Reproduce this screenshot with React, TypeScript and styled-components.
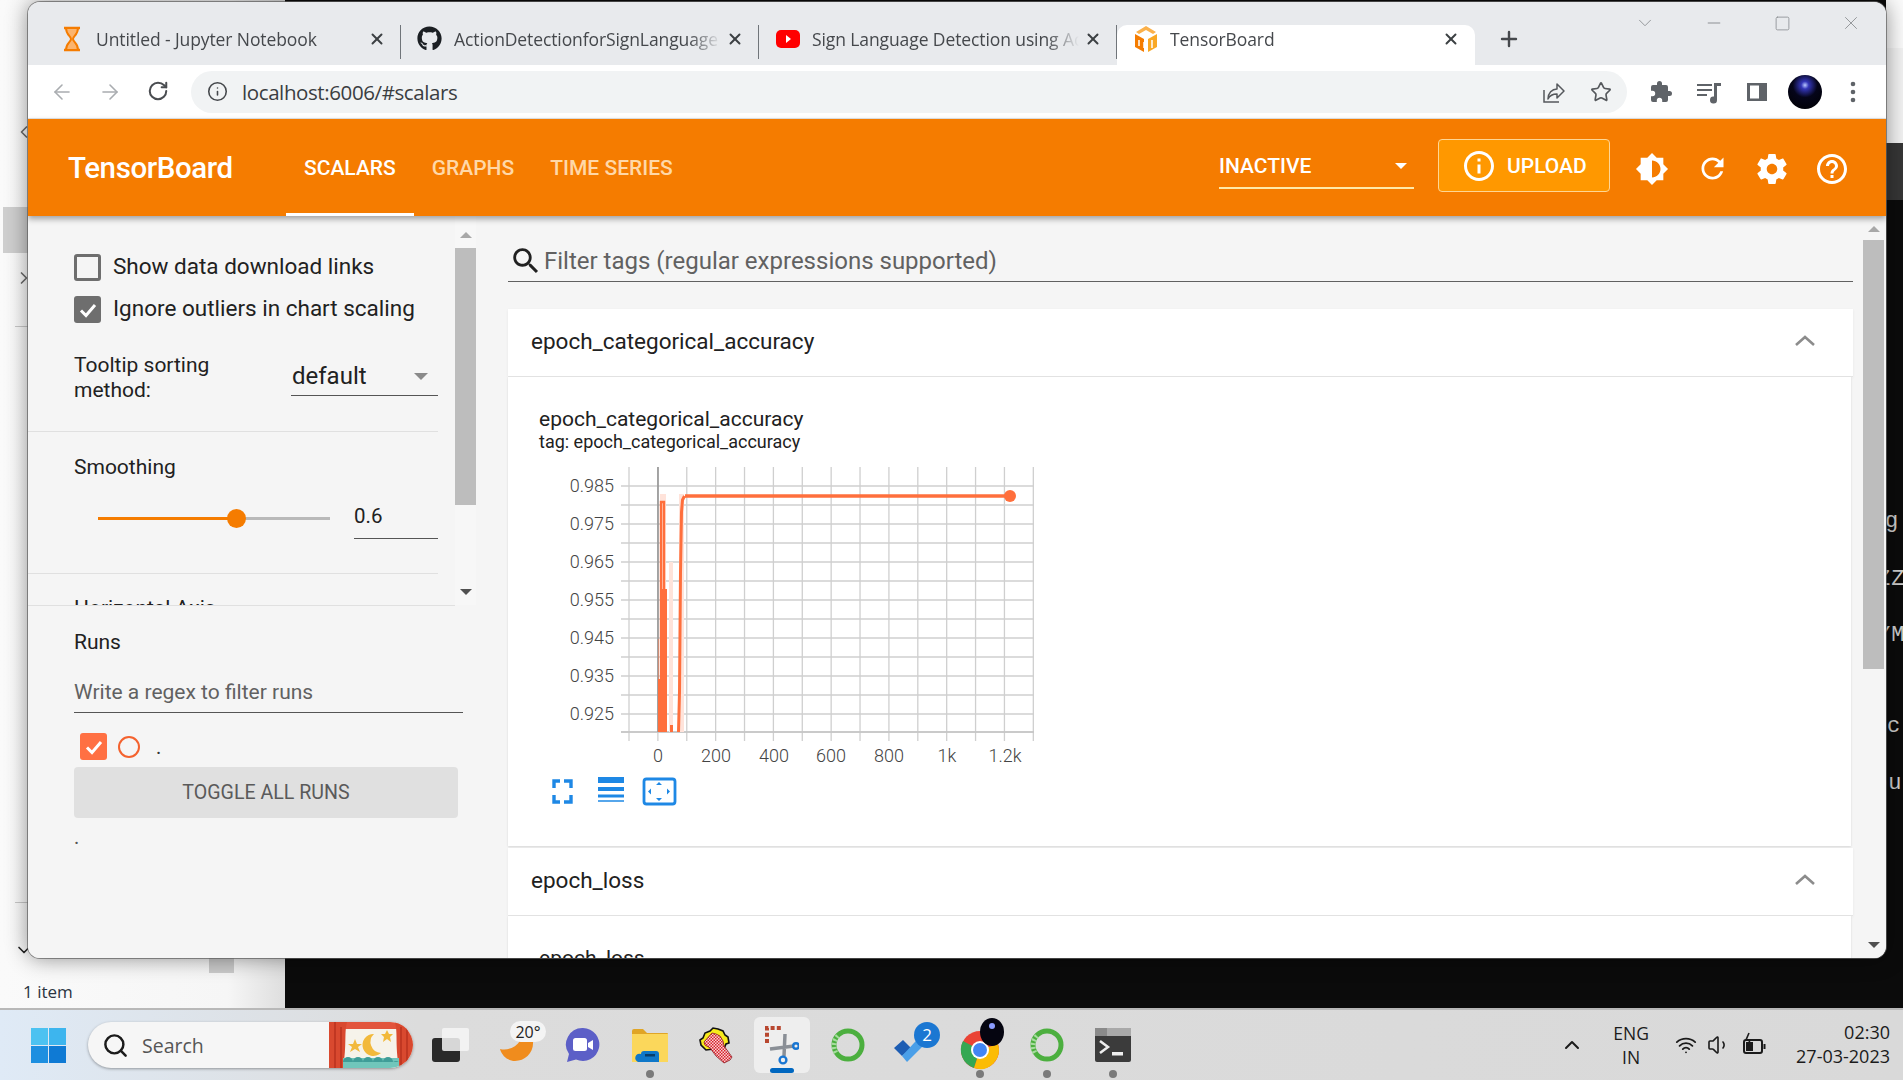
import React from "react";
import styled, { createGlobalStyle } from "styled-components";
import { FaGithub } from "react-icons/fa";
import { ArrowLeft, ArrowRight, RotateCw, Info, Star, X, Plus, Minus, Square, ChevronDown, ChevronUp, ChevronRight, ChevronLeft, Wifi, Volume1, Search as SearchIcon } from "lucide-react";

const Global = createGlobalStyle`
  html, body { margin: 0; padding: 0; width: 1903px; height: 1080px; overflow: hidden; }
  * { box-sizing: border-box; }
  body { font-family: Roboto, "Liberation Sans", sans-serif; }
`;

const Stage = styled.div`
  width: 1903px; height: 1080px; display: flex; flex-direction: column; overflow: hidden;
`;
const Desktop = styled.div`
  position: relative; height: 1008px; background: #0b0b0b; overflow: hidden;
`;
const Explorer = styled.div`
  position: absolute; left: 0; top: 0; width: 285px; height: 1008px;
  background: linear-gradient(90deg, #fafafa, #f6f6f6 80%, #dedede);
  color: #2b3442; font: 400 17px "Open Sans", sans-serif;
`;
const ExplorerTile = styled.div`
  position: absolute; left: 3px; top: 207px; width: 30px; height: 46px; background: #cfcfcf;
`;
const ExplorerLine = styled.div<{ $top: number }>`
  position: absolute; left: 15px; width: 20px; top: ${p => p.$top}px; height: 1px; background: #c8c8c8;
`;
const ExplorerGlyph = styled.div<{ $top: number }>`
  position: absolute; left: 14px; top: ${p => p.$top}px; color: #6a6a6a; display: flex;
`;
const ExplorerStatus = styled.div`
  position: absolute; left: 23px; top: 980px;
`;
const ExplorerThumb = styled.div`
  position: absolute; left: 209px; top: 958px; width: 25px; height: 15px; background: #cbcbcb;
`;
const TopRight = styled.div`
  position: absolute; left: 1886px; top: 0; width: 17px; height: 143px; background: #f3f3f3;
  border-top: 48px solid #fbfbfb;
`;
const TermTitle = styled.div`
  position: absolute; left: 1886px; top: 143px; width: 17px; height: 57px; background: #363636;
`;
const TermLine = styled.div<{ $top: number; $left: number }>`
  position: absolute; left: ${p => p.$left}px; top: ${p => p.$top}px; color: #cfcfcf;
  font: 400 22px "Liberation Mono", monospace; line-height: 24px; white-space: nowrap; letter-spacing: 1px;
`;
const Window = styled.div`
  position: absolute; left: 28px; top: 2px; width: 1858px; height: 956px;
  border-radius: 12px; overflow: hidden; display: flex; flex-direction: column;
  background: #f5f5f5; box-shadow: 0 0 22px rgba(0,0,0,.45), 0 0 0 1px rgba(120,120,120,.7);
`;
const TabStrip = styled.div`
  height: 63px; background: #e8eaed; display: flex; align-items: flex-end; padding-left: 15px; position: relative; flex: none;
`;
const Tab = styled.div<{ $active?: boolean }>`
  width: 358px; height: 40px; display: flex; align-items: center; position: relative;
  background: ${p => (p.$active ? "#fff" : "transparent")};
  border-radius: 10px 10px 0 0;
  color: #45484c;
  padding-bottom: 13px;
  ${p => (p.$active ? "" : "&::after { content: ''; position: absolute; right: 0; top: 0; bottom: 6px; width: 1px; background: #70757a; }")}
`;
const TabIcon = styled.span`
  width: 53px; flex: none; display: flex; justify-content: center; padding-left: 4px;
`;
const TabTitle = styled.span`
  width: 267px; margin-right: 4px; flex: none; overflow: hidden; white-space: nowrap; font: 400 17.5px "Open Sans", sans-serif; letter-spacing: -0.1px;
  -webkit-mask-image: linear-gradient(90deg, #000 88%, transparent 100%);
  mask-image: linear-gradient(90deg, #000 88%, transparent 100%);
`;
const TabClose = styled.span`
  width: 20px; display: flex; justify-content: center; color: #3c4043;
`;
const NewTab = styled.span`
  margin-left: 22px; margin-bottom: 10px; height: 33px; display: flex; align-items: center; color: #45484c;
`;
const WindowControls = styled.div`
  position: absolute; right: 1px; top: 9px; display: flex; color: #8d9094;
`;
const WindowControl = styled.span`
  width: 68.5px; display: flex; justify-content: center; height: 24px; align-items: center;
`;
const Toolbar = styled.div`
  height: 54px; background: #fff; display: flex; align-items: center; flex: none; border-bottom: 1px solid #e4e4e4; color: #5f6368;
`;
const NavButton = styled.span<{ $muted?: boolean }>`
  width: 48px; display: flex; justify-content: center; color: ${p => (p.$muted ? "#a9acb0" : "#4a4d51")};
`;
const NavGroup = styled.div`
  display: flex; padding-left: 10px; width: 163px;
`;
const Omnibox = styled.div`
  width: 1436px; height: 42px; border-radius: 21px; background: #f1f3f4; display: flex; align-items: center;
  padding-left: 16px; padding-right: 2px; color: #202124;
`;
const Address = styled.span`
  margin-left: 14px; font: 400 20.5px "Open Sans", sans-serif; letter-spacing: -0.4px; flex: 1; color: #3a3d41;
`;
const OmniAction = styled.span`
  width: 48px; display: flex; justify-content: center; color: #55585c;
`;
const ToolActions = styled.div`
  display: flex; align-items: center; margin-left: 10px; color: #5f6368;
`;
const ToolAction = styled.span`
  width: 48px; display: flex; justify-content: center;
`;
const Avatar = styled.span`
  width: 34px; height: 34px; border-radius: 50%;
  background: radial-gradient(circle at 50% 30%, #b9c8ff 0, #3436b8 13%, #05051a 42%, #000 100%);
`;
const Header = styled.div`
  height: 97px; background: #f57c00; display: flex; align-items: stretch; flex: none; color: #fff;
  box-shadow: 0 3px 6px rgba(0,0,0,.35); position: relative; z-index: 2;
`;
const Brand = styled.div`
  margin-left: 40px; width: 218px; display: flex; align-items: center; font-size: 29.5px; font-weight: 500; letter-spacing: -0.4px;
`;
const NavTab = styled.div<{ $active?: boolean }>`
  display: flex; align-items: center; padding: 0 18px; font-size: 21px; font-weight: 500; height: 100%; position: relative;
  color: ${p => (p.$active ? "#fff" : "#ffd8a8")};
  ${p => (p.$active ? "&::after { content: ''; position: absolute; left: 0; right: 0; bottom: 0; height: 3px; background: #fff; }" : "")}
`;
const Spacer = styled.div`
  flex: 1;
`;
const RunSelect = styled.div`
  width: 195px; height: 45px; margin-top: 25px; border-bottom: 2px solid #ffe9a8; display: flex; align-items: center;
  justify-content: space-between; font-size: 21px; font-weight: 500; padding-right: 7px;
`;
const Caret = styled.span<{ $color: string; $size?: number }>`
  width: 0; height: 0; display: inline-block;
  border-left: ${p => p.$size ?? 6}px solid transparent; border-right: ${p => p.$size ?? 6}px solid transparent;
  border-top: ${p => p.$size ?? 6}px solid ${p => p.$color};
`;
const Upload = styled.div`
  width: 172px; height: 53px; margin: 20px 5px 0 24px; background: #ff9800; border: 1px solid #ffd694; border-radius: 4px;
  display: flex; align-items: center; padding-left: 22px; gap: 10px; font-size: 21px; font-weight: 500;
`;
const HeaderIcon = styled.span`
  width: 60px; display: flex; align-items: center; justify-content: center;
`;
const HeaderIcons = styled.div`
  display: flex; margin-right: 24px; padding-top: 2px; margin-left: 7px;
`;
const Content = styled.div`
  flex: 1; display: flex; min-height: 0; background: #f5f5f5;
`;
const Sidebar = styled.div`
  width: 450px; flex: none; display: flex; flex-direction: column;
`;
const Settings = styled.div`
  height: 390px; flex: none; display: flex; overflow: hidden; width: 450px;
`;
const SettingsBody = styled.div`
  width: 427px; flex: none; border-bottom: 1px solid #e0e0e0; overflow: hidden;
`;
const SettingsSection = styled.section`
  width: 410px; padding-left: 46px; border-bottom: 1px solid #e0e0e0;
`;
const SectionTop = styled(SettingsSection)`
  height: 216px; padding-top: 38px;
`;
const SectionSmooth = styled(SettingsSection)`
  height: 142px; padding-top: 21px;
`;
const SectionAxis = styled(SettingsSection)`
  padding-top: 22px; border: 0; font-size: 21px; color: #212121;
`;
const CheckRow = styled.label`
  display: flex; align-items: center; gap: 12px; height: 27px; margin-bottom: 15px; font-size: 22.5px; line-height: 25px; color: #212121;
`;
const CheckText = styled.span`
  margin-top: -2px;
`;
const Check = styled.span<{ $on?: boolean; $color?: string }>`
  width: 27px; height: 27px; flex: none; border-radius: 3px; display: flex; align-items: center; justify-content: center;
  background: ${p => (p.$on ? p.$color ?? "#6e6e6e" : "transparent")};
  border: ${p => (p.$on ? "0" : "3px solid #6e6e6e")};
`;
const TooltipRow = styled.div`
  display: flex; margin-top: 30px; font-size: 21px; line-height: 24.5px; color: #212121;
`;
const TooltipLabel = styled.div`
  width: 217px; flex: none;
`;
const Select = styled.div`
  width: 147px; height: 46px; margin-top: -3px; border-bottom: 1px solid #555; display: flex; align-items: center; justify-content: space-between;
  font-size: 24px; padding: 7px 10px 0 1px; color: #212121;
`;
const SmoothLabel = styled.div`
  font-size: 21px; line-height: 28px; color: #212121;
`;
const SliderRow = styled.div`
  display: flex; align-items: flex-start; margin-top: 20px;
`;
const SliderTrack = styled.div`
  margin: 16px 0 0 24px; width: 232px; height: 3px; background: #b9b9b9; position: relative; flex: none;
`;
const SliderFill = styled.div`
  height: 100%; background: #f57c00;
`;
const SliderThumb = styled.div`
  position: absolute; top: -8px; width: 19px; height: 19px; margin-left: -10px; border-radius: 50%; background: #f57c00;
`;
const SmoothValue = styled.div`
  margin-left: 24px; width: 84px; height: 38px; border-bottom: 1px solid #555; font-size: 20.5px; line-height: 31px; color: #212121;
`;
const ScrollRail = styled.div`
  width: 21px; flex: none; display: flex; flex-direction: column; align-items: center; background: #f7f7f7;
`;
const ScrollArrow = styled.span<{ $down?: boolean; $dark?: boolean }>`
  width: 0; height: 0; flex: none;
  border-left: 6px solid transparent; border-right: 6px solid transparent;
  ${p => (p.$down ? `border-top: 6px solid ${p.$dark ? "#505050" : "#a8a8a8"}` : `border-bottom: 6px solid ${p.$dark ? "#505050" : "#a8a8a8"}`)};
`;
const ScrollThumb = styled.div<{ $h: number; $mt: number }>`
  width: 21px; height: ${p => p.$h}px; margin-top: ${p => p.$mt}px; background: #bdbdbd; flex: none;
`;
const RailEnd = styled.div`
  margin-top: auto; margin-bottom: 10px; display: flex;
`;
const SettingsRail = styled(ScrollRail)`
  height: 389px; padding-top: 16px;
`;
const Runs = styled.div`
  padding: 22px 0 0 46px; flex: 1;
`;
const RunsTitle = styled.div`
  font-size: 21px; line-height: 28px; color: #212121;
`;
const RunsFilter = styled.div`
  margin-top: 16px; width: 389px; height: 41px; border-bottom: 1px solid #555; font-size: 21px; line-height: 40px; color: #616161;
`;
const RunRow = styled.div`
  display: flex; align-items: center; margin: 20px 0 0 6px; height: 27px; font-size: 20px; color: #333;
`;
const RunCircle = styled.span`
  width: 22px; height: 22px; border-radius: 50%; border: 2px solid #f4622e; margin-left: 11px;
`;
const RunDot = styled.span`
  margin-left: 16px; line-height: 20px;
`;
const ToggleButton = styled.div`
  margin-top: 7px; width: 384px; height: 51px; background: #e0e0e0; border-radius: 4px; display: flex; align-items: center; justify-content: center;
  font-size: 19.6px; color: #5a5a5a;
`;
const RunDotLine = styled.div`
  margin-top: 5px; font-size: 20px; line-height: 28px; color: #555;
`;
const Main = styled.div`
  flex: 1; min-width: 0; height: 100%; overflow: hidden; padding: 0 10px 0 30px;
`;
const Filter = styled.div`
  height: 66px; border-bottom: 1px solid #616161; display: flex; align-items: center; padding-top: 24px; font-size: 24px; color: #616161;
`;
const FilterIcon = styled.span`
  display: flex; width: 36px; justify-content: center; color: #212121;
`;
const Card = styled.div`
  margin-bottom: 2px;
`;
const FirstCard = styled(Card)`
  margin-top: 27px;
`;
const CardHeader = styled.div`
  height: 68px; background: #fff; border-bottom: 1px solid #e4e4e4; display: flex; align-items: center; justify-content: space-between;
  padding: 0 37px 4px 23px; font-size: 22.5px; color: #212121; box-shadow: 0 1px 3px rgba(0,0,0,.06);
`;
const CardChevron = styled.svg`
  flex: none;
`;
const CardBody = styled.div<{ $h: number }>`
  height: ${p => p.$h}px; background: #fff; margin-right: 2px; padding: 29px 0 0 31px; overflow: hidden; box-shadow: 0 1px 2px rgba(0,0,0,.12);
`;
const ChartTitle = styled.div`
  font-size: 21px; line-height: 26px; color: #212121;
`;
const ChartTag = styled.div`
  font-size: 18px; line-height: 20px; color: #212121;
`;
const ChartSvg = styled.svg`
  display: block; margin: 7px 0 0 1px;
`;
const MainRail = styled(ScrollRail)`
  height: 100%; padding-top: 10px; margin-right: 2px; background: #f5f5f5;
`;
const Taskbar = styled.div`
  height: 72px; flex: none; display: flex; align-items: center; padding-left: 31px;
  background: linear-gradient(90deg, #dfeaf6 0, #dcdcdc 22%, #d9d9d9 100%); border-top: 2px solid #b8b8b8;
`;
const WinLogo = styled.svg`
  flex: none; margin-right: 22px;
`;
const SearchPill = styled.div`
  width: 325px; height: 46px; border-radius: 23px; background: #f6f6f6; box-shadow: 0 1px 3px rgba(0,0,0,.35); display: flex; align-items: center;
  padding-left: 14px; overflow: hidden; color: #1b1b1b; flex: none; margin-right: 5px;
`;
const SearchText = styled.span`
  margin-left: 13px; font: 400 19.5px "Open Sans", sans-serif; color: #555; flex: 1;
`;
const Slot = styled.div<{ $selected?: boolean }>`
  width: 66.2px; height: 56px; display: flex; align-items: center; justify-content: center; position: relative; flex: none;
  ${p => (p.$selected ? "background: #eeeeee; border-radius: 6px; margin: 0 5px; width: 56px;" : "")}
`;
const RunningDot = styled.span`
  position: absolute; left: 50%; margin-left: -4px; bottom: -5px; width: 8px; height: 8px; border-radius: 50%; background: #7a7a7a;
`;
const ActiveBar = styled.span`
  position: absolute; left: 16px; bottom: 0; width: 24px; height: 5px; border-radius: 3px; background: #0067c0;
`;
const Tray = styled.div`
  margin-left: auto; display: flex; align-items: center; color: #1b1b1b; padding-right: 13px;
`;
const TrayCaret = styled.span`
  display: flex; margin-right: 25px; margin-left: 3px;
`;
const TrayLang = styled.div`
  font: 400 17.5px/24px "Open Sans", sans-serif; text-align: center; width: 40px; margin-right: 24px; margin-left: 2px;
`;
const TrayIcons = styled.div`
  display: flex; align-items: center; gap: 10px; width: 100px; margin-right: 21px;
`;
const TrayClock = styled.div`
  font: 400 18px/24px "Open Sans", sans-serif; text-align: right; margin-top: -2px;
`;

const M = ({ d, size = 24, color = "currentColor" }: { d: string; size?: number; color?: string }) => (
  <svg width={size} height={size} viewBox="0 0 24 24" fill={color} fillRule="evenodd"><path d={d} /></svg>
);

const P = {
  bright: "M20 15.31L23.31 12 20 8.69V4h-4.69L12 .69 8.69 4H4v4.69L.69 12 4 15.31V20h4.69L12 23.31 15.31 20H20v-4.69zM12 18V6c3.31 0 6 2.69 6 6s-2.69 6-6 6z",
  refresh: "M17.65 6.35C16.2 4.9 14.21 4 12 4c-4.42 0-7.99 3.58-7.99 8s3.57 8 7.99 8c3.73 0 6.84-2.55 7.73-6h-2.08c-.82 2.33-3.04 4-5.65 4-3.31 0-6-2.69-6-6s2.69-6 6-6c1.66 0 3.14.69 4.22 1.78L13 11h7V4l-2.35 2.35z",
  gear: "M19.43 12.98c.04-.32.07-.64.07-.98s-.03-.66-.07-.98l2.11-1.65c.19-.15.24-.42.12-.64l-2-3.46c-.12-.22-.39-.3-.61-.22l-2.49 1c-.52-.4-1.08-.73-1.69-.98l-.38-2.65C14.46 2.18 14.25 2 14 2h-4c-.25 0-.46.18-.49.42l-.38 2.65c-.61.25-1.17.59-1.69.98l-2.49-1c-.23-.09-.49 0-.61.22l-2 3.46c-.13.22-.07.49.12.64l2.11 1.65c-.04.32-.07.65-.07.98s.03.66.07.98l-2.11 1.65c-.19.15-.24.42-.12.64l2 3.46c.12.22.39.3.61.22l2.49-1c.52.4 1.08.73 1.69.98l.38 2.65c.03.24.24.42.49.42h4c.25 0 .46-.18.49-.42l.38-2.65c.61-.25 1.17-.59 1.69-.98l2.49 1c.23.09.49 0 .61-.22l2-3.46c.12-.22.07-.49-.12-.64l-2.11-1.65zM12 15.5c-1.93 0-3.5-1.57-3.5-3.5s1.57-3.5 3.5-3.5 3.5 1.57 3.5 3.5-1.57 3.5-3.5 3.5z",
  help: "M11 18h2v-2h-2v2zm1-16C6.48 2 2 6.48 2 12s4.48 10 10 10 10-4.48 10-10S17.52 2 12 2zm0 18c-4.41 0-8-3.59-8-8s3.59-8 8-8 8 3.59 8 8-3.59 8-8 8zm0-14c-2.21 0-4 1.79-4 4h2c0-1.1.9-2 2-2s2 .9 2 2c0 2-3 1.75-3 5h2c0-2.25 3-2.5 3-5 0-2.21-1.79-4-4-4z",
  info: "M11 7h2v2h-2zm0 4h2v6h-2zm1-9C6.48 2 2 6.48 2 12s4.48 10 10 10 10-4.48 10-10S17.52 2 12 2zm0 18c-4.41 0-8-3.59-8-8s3.59-8 8-8 8 3.59 8 8-3.59 8-8 8z",
  search: "M15.5 14h-.79l-.28-.27C15.41 12.59 16 11.11 16 9.5 16 5.91 13.09 3 9.5 3S3 5.91 3 9.5 5.91 16 9.5 16c1.61 0 3.09-.59 4.23-1.57l.27.28v.79l5 4.99L20.49 19l-4.99-5zm-6 0C7.01 14 5 11.99 5 9.5S7.01 5 9.5 5 14 7.01 14 9.5 11.99 14 9.5 14z",
  puzzle: "M20.5 11H19V7a2 2 0 0 0-2-2h-4V3.5a2.5 2.5 0 0 0-5 0V5H4a2 2 0 0 0-2 2v3.8h1.5a2.7 2.7 0 0 1 0 5.4H2V20a2 2 0 0 0 2 2h3.8v-1.5a2.7 2.7 0 0 1 5.4 0V22H17a2 2 0 0 0 2-2v-4h1.5a2.5 2.5 0 0 0 0-5z",
  panel: "M2 3h20v18H2zM5 5.5v13h9v-13z",
};

const Tick = ({ size = 20 }: { size?: number }) => (
  <svg width={size} height={size} viewBox="0 0 20 20" fill="none" stroke="#fff" strokeWidth="3"><path d="M3 10.5l5 5L17 5" /></svg>
);

const Chevron = () => (
  <CardChevron width="22" height="14" viewBox="0 0 22 14" fill="none" stroke="#8c8c8c" strokeWidth="2.6"><path d="M2 11l9-8 9 8" /></CardChevron>
);

const ShareIcon = () => (
  <svg width="24" height="24" viewBox="0 0 24 24" fill="none" stroke="currentColor" strokeWidth="1.5">
    <path d="M3 10v12h15" />
    <path d="M7 19c0-6 4-10 9-10V4l7 7-7 7v-4c-4 0-7 1-9 5z" strokeLinejoin="round" />
  </svg>
);
const QueueMusic = () => (
  <svg width="26" height="24" viewBox="0 0 26 24" fill="currentColor">
    <path d="M1 4h15v2H1zM1 9h15v2H1zM1 14h10v2H1zM18 3h7v3h-4v14a3.5 3.5 0 1 1-3-3.4z" />
  </svg>
);
const Dots = () => (
  <svg width="8" height="24" viewBox="0 0 8 24" fill="currentColor">
    <circle cx="4" cy="4" r="2.3" /><circle cx="4" cy="12" r="2.3" /><circle cx="4" cy="20" r="2.3" />
  </svg>
);

const Hourglass = () => (
  <svg width="20" height="26" viewBox="0 0 20 26" fill="none" stroke="#f57c00" strokeWidth="2">
    <path d="M2 2h16M2 24h16" strokeWidth="2.5" />
    <path d="M4 2c0 7 5 8 5 11s-5 4-5 11h12c0-7-5-8-5-11s5-4 5-11z" fill="#fbb46e" />
  </svg>
);
const YouTube = () => (
  <svg width="24" height="18" viewBox="0 0 24 18"><rect width="24" height="18" rx="5" fill="#f00" /><path d="M10 5l5 4-5 4z" fill="#fff" /></svg>
);
const TbLogo = () => (
  <svg width="24" height="28" viewBox="0 0 24 28">
    <path d="M12 1L2 7l3 2 7-4 7 4 3-2z" fill="#fbb14b" />
    <path d="M1 9l9 5v13L1 22z" fill="#f57c00" />
    <path d="M23 9l-9 5v13l9-5z" fill="#f9a825" />
    <path d="M5 15v6M10 17v6M18 15v8" stroke="#fff" strokeWidth="1.5" />
  </svg>
);

const Chart = () => {
  const hy = [487, 506, 525, 544, 563, 582, 601, 620, 639, 658, 677, 696, 715, 733];
  const vx = Array.from({ length: 15 }, (_, i) => 629 + i * 28.88);
  const yl = [["0.985", 487], ["0.975", 525], ["0.965", 563], ["0.955", 601], ["0.945", 639], ["0.935", 677], ["0.925", 715]] as const;
  const xl = [["0", 658], ["200", 716], ["400", 774], ["600", 831], ["800", 889], ["1k", 947], ["1.2k", 1005]] as const;
  return (
    <ChartSvg width="500" height="360" viewBox="540 460 500 360">
      {hy.map(y => <line key={y} x1="621" x2="1034" y1={y} y2={y} stroke="#cfcfcf" strokeWidth="1.5" />)}
      {vx.map(x => <line key={x} x1={x} x2={x} y1="468" y2="742" stroke="#cfcfcf" strokeWidth="1.3" />)}
      <line x1="621" x2="1034" y1="733" y2="733" stroke="#c4c4c4" strokeWidth="1.4" />
      <line x1="658" x2="658" y1="468" y2="733" stroke="#8a8a8a" strokeWidth="1.4" />
      <g fill="#ffe3da">
        <rect x="660" y="495" width="6" height="238" />
        <rect x="669" y="563" width="4" height="170" />
        <rect x="679" y="495" width="5" height="238" />
      </g>
      <g fill="none" stroke="#ff6f3c">
        <path d="M658.5 733V640" strokeWidth="1" opacity=".45" />
        <path d="M661 733V503h3v90" strokeWidth="2.4" />
        <path d="M685 497H1010" strokeWidth="3.4" />
        <path d="M678.5 733l1-40 1-120 1-60 1-12 2-4" strokeWidth="3" />
      </g>
      <g fill="#ff6f3c">
        <rect x="658" y="680" width="2" height="53" />
        <rect x="661" y="590" width="6" height="143" />
        <rect x="670" y="726" width="3" height="7" />
        <circle cx="1010" cy="497" r="6" />
      </g>
      <g fontFamily="Roboto, sans-serif" fontSize="18" fontWeight="300" fill="#444">
        {yl.map(([t, y]) => <text key={t} x="614" y={y + 6} textAnchor="end">{t}</text>)}
        {xl.map(([t, x]) => <text key={t} x={x} y="763" textAnchor="middle">{t}</text>)}
      </g>
      <g fill="none" stroke="#1e88e5" strokeWidth="3.4">
        <path d="M554 789v-7h6M564 782h7v7M571 796v7h-7M560 803h-6v-7" />
        <path d="M598 781h26" strokeWidth="6" /><path d="M598 790h26" strokeWidth="4" /><path d="M598 797h26" strokeWidth="3" /><path d="M598 802h26" strokeWidth="1.5" />
        <rect x="644" y="780" width="31" height="25" rx="2.5" strokeWidth="2.8" />
      </g>
      <g fill="#1e88e5">
        <path d="M659 783l3 3h-6zM659 802l3-3h-6zM648 792.5l3-3v6zM670 792.5l-3-3v6z" />
      </g>
    </ChartSvg>
  );
};

const Curtains = () => (
  <svg width="84" height="46" viewBox="0 0 84 46" style={{ flex: "none" }}>
    <rect width="84" height="46" fill="#f6f3ea" />
    <rect y="0" width="84" height="7" fill="#e2543c" />
    <path d="M0 0h18c-3 12 0 22-4 46H0z" fill="#d9492f" />
    <path d="M84 0H66c3 12 0 22 4 46h14z" fill="#d9492f" />
    <path d="M6 0v46M12 5v41M72 5v41M78 0v46" stroke="#b8321f" strokeWidth="1.5" />
    <path d="M45 12a11 11 0 1 0 7 19 11 11 0 0 1-7-19z" fill="#f2b93b" />
    <path d="M26 17l2 5 5 0-4 3 2 5-5-3-5 3 2-5-4-3 5 0z" fill="#f2b93b" />
    <path d="M58 8l2 4 4 0-3 3 1 5-4-3-4 3 1-5-3-3 4 0z" fill="#f2b93b" />
    <rect x="14" y="36" width="56" height="10" fill="#70c6bb" />
    <path d="M14 40a5 5 0 0 1 10 0 5 5 0 0 1 10 0 5 5 0 0 1 10 0 5 5 0 0 1 10 0 5 5 0 0 1 10 0 5 5 0 0 1 6 0" fill="#3f9d98" />
  </svg>
);

const Ring = ({ size = 36 }: { size?: number }) => (
  <svg width={size} height={size} viewBox="0 0 36 36" fill="none">
    <circle cx="18" cy="18" r="14" stroke="#4caf3f" strokeWidth="5" />
    <path d="M8 9A14 14 0 0 0 6 26" stroke="#a8dca0" strokeWidth="5" strokeDasharray="2 2" />
  </svg>
);

const TaskIcons = {
  view: (
    <svg width="38" height="34" viewBox="0 0 38 34">
      <rect x="0" y="10" width="28" height="24" rx="3" fill="#2a2a2a" />
      <rect x="10" y="0" width="27" height="23" rx="2" fill="#f6f6f6" opacity=".85" />
    </svg>
  ),
  weather: (
    <svg width="60" height="48" viewBox="0 0 60 48">
      <path d="M13 28c8 2 16-2 20-8h13c1 12-8 20-18 20-7 0-13-5-15-12z" fill="#f08c1d" />
      <rect x="23" y="0" width="36" height="21" rx="10.5" fill="#f4f4f4" />
      <text x="41" y="17" textAnchor="middle" fontFamily="Open Sans, sans-serif" fontSize="16" fill="#222">20°</text>
    </svg>
  ),
  meet: (
    <svg width="36" height="36" viewBox="0 0 36 36">
      <path d="M18 1a16.5 16.5 0 1 1-7 31.5L2 35l2-8A16.5 16.5 0 0 1 18 1z" fill="#5c5fc7" />
      <rect x="8" y="11" width="14" height="13" rx="2.5" fill="#fff" />
      <path d="M23 16l5-3v10l-5-3z" fill="#fff" />
    </svg>
  ),
  files: (
    <svg width="38" height="33" viewBox="0 0 38 33">
      <path d="M1 2a2 2 0 0 1 2-2h9l4 4h20a1 1 0 0 1 1 1v4H1z" fill="#e0a526" />
      <rect x="1" y="5" width="36" height="28" fill="#fbd75b" />
      <path d="M10 25a3 3 0 0 1 3-3h12a3 3 0 0 1 3 3v8H7a3 3 0 0 1 3-8z" fill="#0f78c9" />
      <rect x="14" y="25" width="10" height="2.5" fill="#083e6b" />
    </svg>
  ),
  hand: (
    <svg width="38" height="38" viewBox="0 0 38 38">
      <defs>
        <pattern id="chk" width="3" height="3" patternUnits="userSpaceOnUse">
          <rect width="3" height="3" fill="#f8d4d4" /><rect width="1.5" height="1.5" fill="#d8202c" /><rect x="1.5" y="1.5" width="1.5" height="1.5" fill="#d8202c" />
        </pattern>
      </defs>
      <path d="M3 14l3-2 2-5 5-2 3-3 5 1 5 2 2 4 3 2 1 6-3 1-3 7-9-2-8 1-5-5z" fill="#f6ea1c" stroke="#111" strokeWidth="1.6" />
      <path d="M7 16l8-9 4 1 4 2 3 5 1 5 8 11-2 3-6 3-8-7-6-8-5-3z" fill="url(#chk)" stroke="#8a1a22" strokeWidth=".8" />
    </svg>
  ),
  snip: (
    <svg width="34" height="40" viewBox="0 0 34 40" fill="none">
      <path d="M2 18V3h15" stroke="#b8472f" strokeWidth="4" strokeDasharray="4 2.2" />
      <path d="M20 9l-1 22M5 24l24-3" stroke="#8a8f96" strokeWidth="3.5" />
      <circle cx="31" cy="21" r="2.8" stroke="#1976d2" strokeWidth="2.4" />
      <circle cx="18" cy="35" r="3.4" stroke="#1976d2" strokeWidth="2.4" />
    </svg>
  ),
  tasks: (
    <svg width="62" height="50" viewBox="0 0 62 50">
      <g transform="translate(10 0)">
        <path d="M1 28l9-8 8 8-9 8z" fill="#1d5db3" />
        <path d="M9 36l24-26 7 6-26 26z" fill="#4a9fe8" />
        <circle cx="34" cy="15" r="13" fill="#1b77d2" />
        <text x="34" y="21" textAnchor="middle" fontFamily="Open Sans, sans-serif" fontSize="17" fill="#fff">2</text>
      </g>
    </svg>
  ),
  chrome: (
    <svg width="60" height="54" viewBox="0 0 60 54">
      <g transform="translate(10 0)">
        <circle cx="20" cy="32" r="19" fill="#ea4335" />
        <path d="M20 32L3 23A19 19 0 0 0 14 50z" fill="#34a853" />
        <path d="M20 32l-6 18A19 19 0 0 0 38 26z" fill="#fbbc05" />
        <circle cx="20" cy="32" r="9" fill="#fff" /><circle cx="20" cy="32" r="7" fill="#4285f4" />
        <ellipse cx="32" cy="14" rx="12" ry="14" fill="#050510" />
        <circle cx="32" cy="8" r="3" fill="#8b9cff" />
      </g>
    </svg>
  ),
  term: (
    <svg width="36" height="34" viewBox="0 0 36 34">
      <rect width="36" height="34" rx="2" fill="#3b3b3b" />
      <rect width="36" height="8" fill="#8a8a8a" />
      <rect x="12" width="24" height="8" fill="#a9a9a9" />
      <path d="M5 13l8 6-8 6" fill="none" stroke="#eee" strokeWidth="2.5" />
      <rect x="17" y="24" width="11" height="3.5" fill="#eee" />
    </svg>
  ),
};

const BatteryIcon = () => (
  <svg width="26" height="26" viewBox="0 0 26 26" fill="none" stroke="currentColor" strokeWidth="2">
    <rect x="3" y="8" width="18" height="13" rx="2" />
    <path d="M23.5 12v5" />
    <path d="M5 10h7v9H5z" fill="currentColor" stroke="none" />
    <path d="M8 1L5 8h4l-2 5" strokeWidth="1.6" />
  </svg>
);

export default function App() {
  return (
    <Stage>
      <Global />
      <Desktop>
        <Explorer>
          <ExplorerGlyph $top={122}><ChevronLeft size={20} /></ExplorerGlyph>
          <ExplorerTile />
          <ExplorerGlyph $top={268}><ChevronRight size={20} /></ExplorerGlyph>
          <ExplorerLine $top={326} />
          <ExplorerLine $top={902} />
          <ExplorerGlyph $top={940}><ChevronDown size={20} color="#222" /></ExplorerGlyph>
          <ExplorerThumb />
          <ExplorerStatus>1 item</ExplorerStatus>
        </Explorer>
        <TopRight />
        <TermTitle />
        <TermLine $top={510} $left={1885}>g:</TermLine>
        <TermLine $top={568} $left={1877}>ZZ</TermLine>
        <TermLine $top={624} $left={1877}>YM</TermLine>
        <TermLine $top={715} $left={1887}>c</TermLine>
        <TermLine $top={772} $left={1874}>ou</TermLine>
        <Window>
          <TabStrip>
            <Tab>
              <TabIcon><Hourglass /></TabIcon>
              <TabTitle>Untitled - Jupyter Notebook</TabTitle>
              <TabClose><X size={18} strokeWidth={2.6} /></TabClose>
            </Tab>
            <Tab>
              <TabIcon><FaGithub size={25} color="#1b1f23" /></TabIcon>
              <TabTitle>ActionDetectionforSignLanguage</TabTitle>
              <TabClose><X size={18} strokeWidth={2.6} /></TabClose>
            </Tab>
            <Tab>
              <TabIcon><YouTube /></TabIcon>
              <TabTitle>Sign Language Detection using Action</TabTitle>
              <TabClose><X size={18} strokeWidth={2.6} /></TabClose>
            </Tab>
            <Tab $active>
              <TabIcon><TbLogo /></TabIcon>
              <TabTitle>TensorBoard</TabTitle>
              <TabClose><X size={18} strokeWidth={2.6} /></TabClose>
            </Tab>
            <NewTab><Plus size={24} strokeWidth={2.4} /></NewTab>
            <WindowControls>
              <WindowControl><ChevronDown size={22} strokeWidth={1} /></WindowControl>
              <WindowControl><Minus size={20} strokeWidth={1.2} /></WindowControl>
              <WindowControl><Square size={17} strokeWidth={1.2} /></WindowControl>
              <WindowControl><X size={22} strokeWidth={1} /></WindowControl>
            </WindowControls>
          </TabStrip>
          <Toolbar>
            <NavGroup>
              <NavButton $muted><ArrowLeft size={24} strokeWidth={1.6} /></NavButton>
              <NavButton $muted><ArrowRight size={24} strokeWidth={1.6} /></NavButton>
              <NavButton><RotateCw size={22} strokeWidth={2.2} /></NavButton>
            </NavGroup>
            <Omnibox>
              <Info size={21} strokeWidth={1.8} color="#45484c" />
              <Address>localhost:6006/#scalars</Address>
              <OmniAction><ShareIcon /></OmniAction>
              <OmniAction><Star size={22} strokeWidth={1.8} /></OmniAction>
            </Omnibox>
            <ToolActions>
              <ToolAction><M d={P.puzzle} size={24} /></ToolAction>
              <ToolAction><QueueMusic /></ToolAction>
              <ToolAction><M d={P.panel} size={24} /></ToolAction>
              <ToolAction><Avatar /></ToolAction>
              <ToolAction><Dots /></ToolAction>
            </ToolActions>
          </Toolbar>
          <Header>
            <Brand>TensorBoard</Brand>
            <NavTab $active>SCALARS</NavTab>
            <NavTab>GRAPHS</NavTab>
            <NavTab>TIME SERIES</NavTab>
            <Spacer />
            <RunSelect>INACTIVE<Caret $color="#fff" /></RunSelect>
            <Upload><M d={P.info} size={36} />UPLOAD</Upload>
            <HeaderIcons>
              <HeaderIcon><M d={P.bright} size={34} /></HeaderIcon>
              <HeaderIcon><M d={P.refresh} size={33} /></HeaderIcon>
              <HeaderIcon><M d={P.gear} size={36} /></HeaderIcon>
              <HeaderIcon><M d={P.help} size={36} /></HeaderIcon>
            </HeaderIcons>
          </Header>
          <Content>
            <Sidebar>
              <Settings>
                <SettingsBody>
                  <SectionTop>
                    <CheckRow><Check /><CheckText>Show data download links</CheckText></CheckRow>
                    <CheckRow><Check $on><Tick /></Check><CheckText>Ignore outliers in chart scaling</CheckText></CheckRow>
                    <TooltipRow>
                      <TooltipLabel>Tooltip sorting<br />method:</TooltipLabel>
                      <Select>default<Caret $color="#8a8a8a" $size={7} /></Select>
                    </TooltipRow>
                  </SectionTop>
                  <SectionSmooth>
                    <SmoothLabel>Smoothing</SmoothLabel>
                    <SliderRow>
                      <SliderTrack>
                        <SliderFill style={{ width: "60%" }} />
                        <SliderThumb style={{ left: "60%" }} />
                      </SliderTrack>
                      <SmoothValue>0.6</SmoothValue>
                    </SliderRow>
                  </SectionSmooth>
                  <SectionAxis>Horizontal Axis</SectionAxis>
                </SettingsBody>
                <SettingsRail>
                  <ScrollArrow />
                  <ScrollThumb $h={257} $mt={10} />
                  <RailEnd><ScrollArrow $down $dark /></RailEnd>
                </SettingsRail>
              </Settings>
              <Runs>
                <RunsTitle>Runs</RunsTitle>
                <RunsFilter>Write a regex to filter runs</RunsFilter>
                <RunRow>
                  <Check $on $color="#ff7043"><Tick /></Check>
                  <RunCircle />
                  <RunDot>.</RunDot>
                </RunRow>
                <ToggleButton>TOGGLE ALL RUNS</ToggleButton>
                <RunDotLine>.</RunDotLine>
              </Runs>
            </Sidebar>
            <Main>
              <Filter>
                <FilterIcon><M d={P.search} size={34} /></FilterIcon>
                Filter tags (regular expressions supported)
              </Filter>
              <FirstCard>
                <CardHeader>epoch_categorical_accuracy<Chevron /></CardHeader>
                <CardBody $h={469}>
                  <ChartTitle>epoch_categorical_accuracy</ChartTitle>
                  <ChartTag>tag: epoch_categorical_accuracy</ChartTag>
                  <Chart />
                </CardBody>
              </FirstCard>
              <Card>
                <CardHeader>epoch_loss<Chevron /></CardHeader>
                <CardBody $h={60}>
                  <ChartTitle>epoch_loss</ChartTitle>
                </CardBody>
              </Card>
            </Main>
            <MainRail>
              <ScrollArrow />
              <ScrollThumb $h={429} $mt={8} />
              <RailEnd><ScrollArrow $down $dark /></RailEnd>
            </MainRail>
          </Content>
        </Window>
      </Desktop>
      <Taskbar>
        <WinLogo width="35" height="35" viewBox="0 0 35 35">
          <rect width="17" height="17" fill="#4cc2f1" /><rect x="18" width="17" height="17" fill="#3db5ee" />
          <rect y="18" width="17" height="17" fill="#1d8fe0" /><rect x="18" y="18" width="17" height="17" fill="#0f7ad4" />
        </WinLogo>
        <SearchPill>
          <SearchIcon size={27} strokeWidth={2.2} />
          <SearchText>Search</SearchText>
          <Curtains />
        </SearchPill>
        <Slot>{TaskIcons.view}</Slot>
        <Slot>{TaskIcons.weather}</Slot>
        <Slot>{TaskIcons.meet}</Slot>
        <Slot>{TaskIcons.files}<RunningDot /></Slot>
        <Slot>{TaskIcons.hand}</Slot>
        <Slot $selected>{TaskIcons.snip}<ActiveBar /></Slot>
        <Slot><Ring /></Slot>
        <Slot>{TaskIcons.tasks}</Slot>
        <Slot>{TaskIcons.chrome}<RunningDot /></Slot>
        <Slot><Ring /><RunningDot /></Slot>
        <Slot>{TaskIcons.term}<RunningDot /></Slot>
        <Tray>
          <TrayCaret><ChevronUp size={24} strokeWidth={2} /></TrayCaret>
          <TrayLang>ENG<br />IN</TrayLang>
          <TrayIcons>
            <Wifi size={22} strokeWidth={2} />
            <Volume1 size={24} strokeWidth={1.6} />
            <BatteryIcon />
          </TrayIcons>
          <TrayClock>02:30<br />27-03-2023</TrayClock>
        </Tray>
      </Taskbar>
    </Stage>
  );
}
